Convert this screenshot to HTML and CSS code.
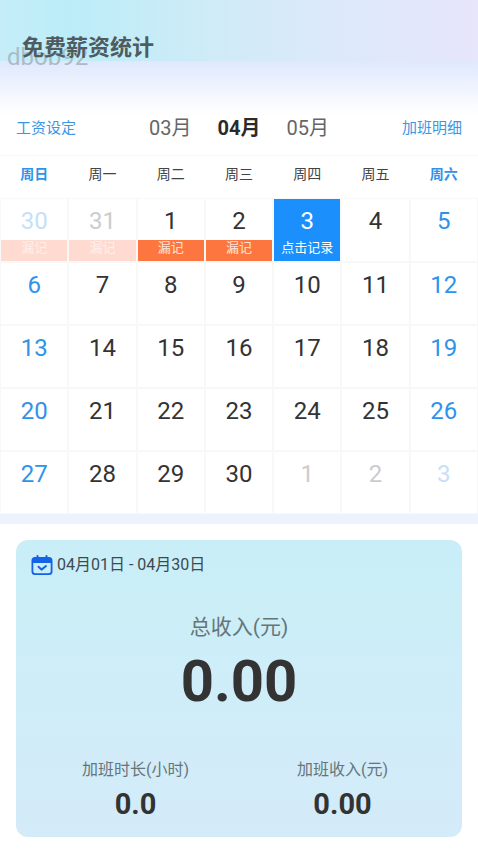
FILE: index.html
```html
<!DOCTYPE html>
<html lang="zh-CN">
<head>
<meta charset="utf-8">
<meta name="viewport" content="width=device-width, initial-scale=1">
<title>免费薪资统计</title>
<link rel="stylesheet" href="styles.css">
</head>

<body>
<header class="top">
	<span class="mark">dbob92</span>
	<h1 class="title">免费薪资统计</h1>
</header>

<nav class="months">
	<a class="link" href="#">工资设定</a>
	<div class="switch">
		<button type="button" class="month">03月</button>
		<button type="button" class="month on">04月</button>
		<button type="button" class="month">05月</button>
	</div>
	<a class="link" href="#">加班明细</a>
</nav>

<table class="calendar">
	<thead>
		<tr>
			<th class="rest">周日</th><th>周一</th><th>周二</th><th>周三</th><th>周四</th><th>周五</th><th class="rest">周六</th>
		</tr>
	</thead>
	<tbody>
		<tr>
			<td class="rest out">30<span class="tag">漏记</span></td>
			<td class="out">31<span class="tag">漏记</span></td>
			<td>1<span class="tag">漏记</span></td>
			<td>2<span class="tag">漏记</span></td>
			<td class="today">3<span class="tag">点击记录</span></td>
			<td>4</td>
			<td class="rest">5</td>
		</tr>
		<tr>
			<td class="rest">6</td><td>7</td><td>8</td><td>9</td><td>10</td><td>11</td><td class="rest">12</td>
		</tr>
		<tr>
			<td class="rest">13</td><td>14</td><td>15</td><td>16</td><td>17</td><td>18</td><td class="rest">19</td>
		</tr>
		<tr>
			<td class="rest">20</td><td>21</td><td>22</td><td>23</td><td>24</td><td>25</td><td class="rest">26</td>
		</tr>
		<tr>
			<td class="rest">27</td><td>28</td><td>29</td><td>30</td><td class="out">1</td><td class="out">2</td><td class="rest out">3</td>
		</tr>
	</tbody>
</table>

<section class="card">
	<div class="range">
		<svg class="icon" viewBox="0 0 22 21" width="22" height="21" aria-hidden="true">
			<path d="M4 2h14a3.5 3.5 0 0 1 3.5 3.5v11A3.5 3.5 0 0 1 18 20H4a3.500 3.500 0 0 1-3.500-3.500v-11A3.500 3.500 0 0 1 4 2zM2.300 8v8.200a2 2 0 0 0 2 2h13.400a2 2 0 0 0 2-2V8z" fill="#1463e6" fill-rule="evenodd"/>
			<path d="M6.500 1v3M15.500 1v3" stroke="#1463e6" stroke-width="2" stroke-linecap="round"/>
			<path d="M7.500 11.800l3 2.800 4.500-3.600" fill="none" stroke="#1463e6" stroke-width="2" stroke-linecap="round" stroke-linejoin="round"/>
		</svg>
		<span>04月01日 - 04月30日</span>
	</div>
	<div class="total">
		<div class="total-name">总收入(元)</div>
		<div class="total-num">0.00</div>
	</div>
	<div class="detail">
		<div class="item">
			<div class="item-name">加班时长(小时)</div>
			<div class="item-num">0.0</div>
		</div>
		<div class="item">
			<div class="item-name">加班收入(元)</div>
			<div class="item-num">0.00</div>
		</div>
	</div>
</section>
</body>
</html>
```

FILE: styles.css
```css
* {
	box-sizing: border-box;
}
body {
	margin: 0;
	background: #fff;
	color: #333;
	font-family: Roboto, "Noto Sans CJK SC", sans-serif;
}

/* 頂部 */
.top {
	position: relative;
	height: 115px;
	padding: 32px 22px 0;
	background: linear-gradient(90deg, #c5edf9 0%, #bbedf8 14%, #d1ebf7 48%, #dce9fb 70%, #e7e6fb 100%) no-repeat 0 0 / 100% 61px,
		linear-gradient(#dfe8fd 61px, #fff 115px);
}
.title {
	position: relative;
	margin: 0;
	color: #505b60;
	font-size: 22px;
	line-height: 32px;
	font-weight: bold;
}
.mark {
	position: absolute;
	left: 7px;
	top: 43px;
	color: #a9bcc6;
	font-size: 24px;
	line-height: 28px;
}

/* 月份 */
.months {
	display: flex;
	justify-content: space-between;
	align-items: center;
	height: 40px;
	padding: 0 16px 15px;
}
.link {
	color: #3b97e3;
	font-size: 15px;
	line-height: 22px;
	text-decoration: none;
}
.switch {
	display: flex;
	gap: 26px;
}
.month {
	padding: 0;
	border: 0;
	background: none;
	color: #666;
	font-family: inherit;
	font-size: 20px;
	line-height: 26px;
}
.month.on {
	color: #2b2b2b;
	font-weight: bold;
}

/* 日曆 */
.calendar {
	width: 100%;
	table-layout: fixed;
	border-collapse: separate;
	border-spacing: 0;
	border-top: 1px solid #f7f7f7;
	border-bottom: 10px solid #edf3fd;
}
.calendar th {
	height: 42px;
	padding: 0 0 8px;
	font-size: 14px;
	font-weight: normal;
	color: #444;
}
.calendar th.rest {
	font-weight: bold;
}
.calendar .rest {
	color: #2f93ea;
}
.calendar td {
	height: 63px;
	padding: 8px 0 0;
	border: 1px solid #f8f8f8;
	vertical-align: top;
	text-align: center;
	font-size: 24px;
	line-height: 28px;
}
.calendar .out {
	color: #ccc;
}
.calendar .rest.out {
	color: #c5e0f8;
}
.tag {
	display: block;
	height: 21px;
	margin-top: 5px;
	background: #fd763f;
	color: #ffe3d8;
	font-size: 13px;
	line-height: 16px;
}
.out .tag {
	background: #fedad0;
	color: #fff0eb;
}
.calendar .today {
	background: #1b90fd;
	background-clip: padding-box;
	color: #fff;
}
.today .tag {
	background: none;
	color: #fff;
}

/* 收入 */
.card {
	margin: 16px 16px 13px;
	padding: 12px 16px 16px;
	border-radius: 12px;
	background: linear-gradient(#c9eef7, #cdeef8 35%, #d4ebf8);
}
.range {
	display: flex;
	align-items: center;
	gap: 4px;
	color: #3c4a50;
	font-size: 16px;
	line-height: 26px;
}
.icon {
	margin-left: -1px;
}
.total {
	margin-top: 34px;
	text-align: center;
}
.total-name {
	color: #67757a;
	font-size: 21px;
	line-height: 30px;
}
.total-num {
	font-size: 58px;
	line-height: 78px;
	font-weight: bold;
}
.detail {
	display: flex;
	margin-top: 38px;
	text-align: center;
}
.item {
	flex: 1;
}
.item-name {
	color: #67757a;
	font-size: 16px;
	line-height: 24px;
}
.item-num {
	margin-top: 5px;
	font-size: 29px;
	line-height: 34px;
	font-weight: bold;
}
```
